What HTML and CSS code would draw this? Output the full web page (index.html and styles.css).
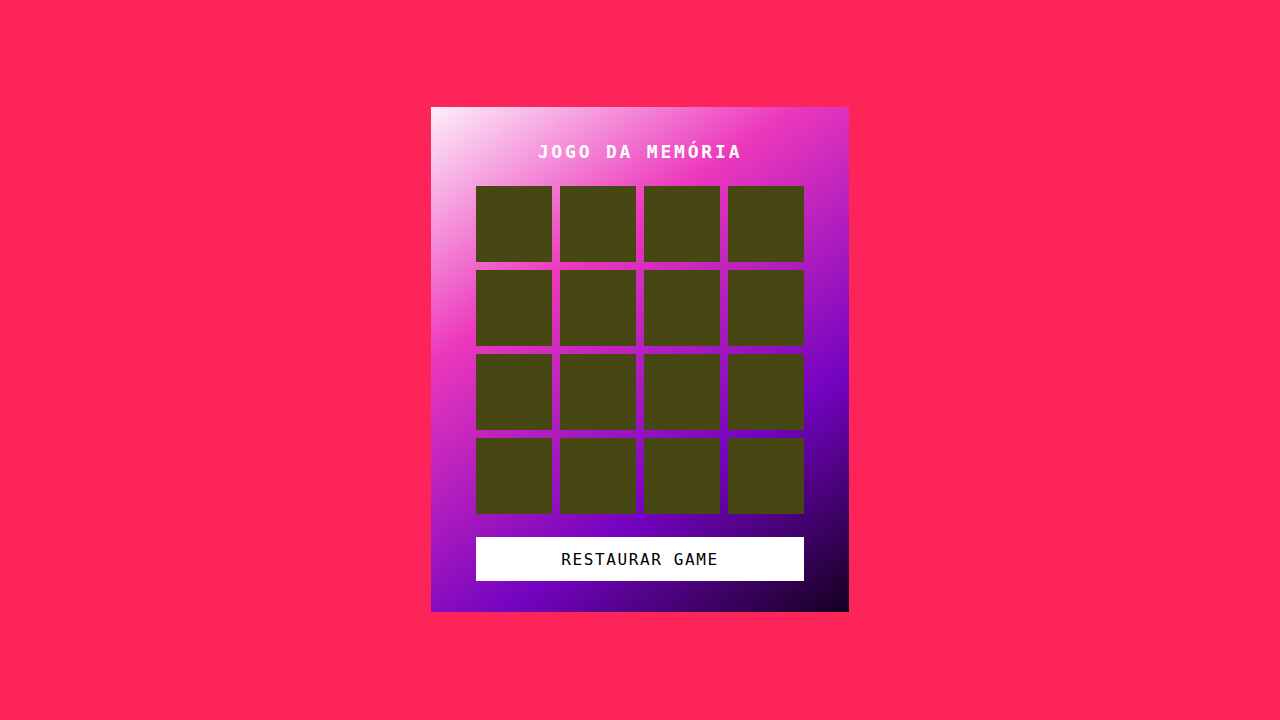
FILE: index.html
```html
<!DOCTYPE html>
<html lang="pt-br">
<head>
    <meta charset="UTF-8">
    <meta name="viewport" content="width=device-width, initial-scale=1.0">
    <title>Jogo da Memória</title>
    <link rel="stylesheet" href="styles.css">
</head>
<body>

    <div class="container">
        <h2 class="titulo">JOGO DA MEMÓRIA</h2>
        <div class="game">
            <div class="item"></div>
            <div class="item"></div>
            <div class="item"></div>
            <div class="item"></div>
            <div class="item"></div>
            <div class="item"></div>
            <div class="item"></div>
            <div class="item"></div>
            <div class="item"></div>
            <div class="item"></div>
            <div class="item"></div>
            <div class="item"></div>
            <div class="item"></div>
            <div class="item"></div>
            <div class="item"></div>
            <div class="item"></div>
        </div>
        <button class="reset">RESTAURAR GAME</button>
    </div>

</body>
</html>
```

FILE: styles.css
```css
* {
    margin: 0;
    padding: 0;
    box-sizing: border-box;
    font-family: "DejaVu Sans Mono", "Liberation Mono", monospace;
}
body {
    display: flex;
    justify-content: center;
    align-items: center;
    min-height: 100vh;
    background: #fd2459;
}
.container {
    display: flex;
    flex-direction: column;
    align-items: center;
    gap: 24px;
    width: 418px;
    padding: 34px 45px 31px;
    margin-bottom: 1px;
    background: linear-gradient(325deg, #14001e 0%, #7303c0 30%, #ec38bc 68%, #fdeff9 100%);
}
.titulo {
    font-size: 18px;
    font-weight: bold;
    letter-spacing: 2.8px;
    color: #fff;
    line-height: 21px;
}
.game {
    display: grid;
    grid-template-columns: repeat(4, 76px);
    grid-auto-rows: 76px;
    gap: 8px;
    margin-bottom: -1px;
}
.item {
    background: #474713;
}
.reset {
    width: 100%;
    height: 44px;
    border: 0;
    background: #fff;
    color: #000;
    font-size: 16px;
    font-weight: 500;
    letter-spacing: 1.6px;
    cursor: pointer;
}
```
